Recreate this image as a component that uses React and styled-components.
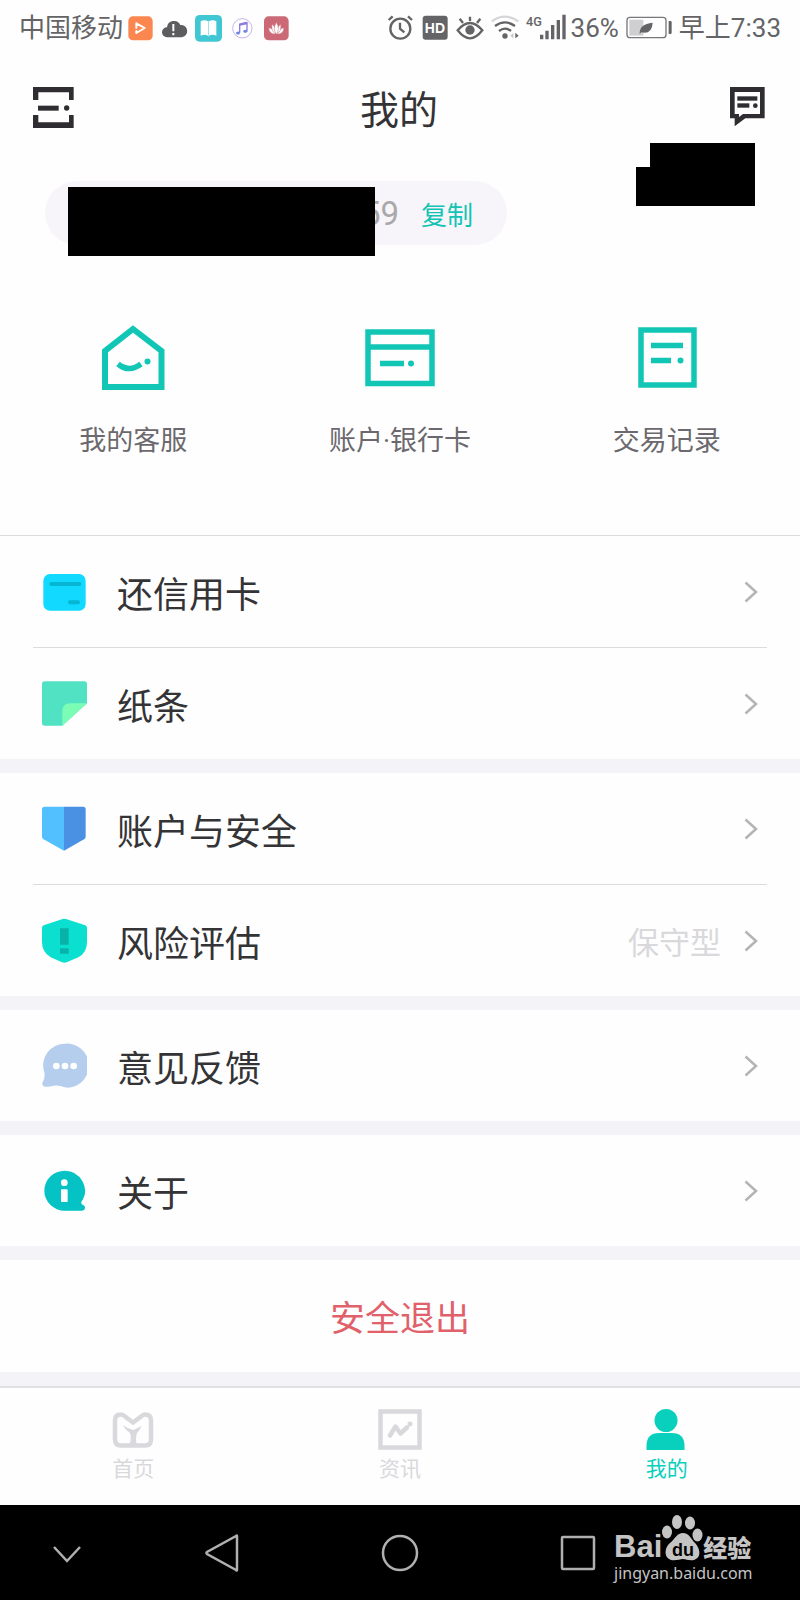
import styled, { createGlobalStyle } from "styled-components";

const cjkFont = `"Noto Sans CJK SC", sans-serif`;

const GlobalStyle = createGlobalStyle`
  * {
    box-sizing: border-box;
  }

  body {
    margin: 0;
    background: #fefefe;
    color: #343336;
    font-family: Roboto, "Noto Sans CJK SC", sans-serif;
  }

  a {
    color: inherit;
    text-decoration: none;
  }

  button {
    border: none;
    padding: 0;
    background: none;
    font: inherit;
    cursor: pointer;
  }

  svg {
    display: block;
    flex: none;
  }
`;

const Page = styled.div`
  display: flex;
  flex-direction: column;
  min-height: 100vh;
`;

const StatusBar = styled.div`
  display: flex;
  justify-content: space-between;
  align-items: center;
  height: 56px;
  padding: 0 19px;
  color: #646466;
  font-size: 26px;
  line-height: 36px;
  white-space: nowrap;
`;

const StatusGroup = styled.div`
  display: flex;
  align-items: center;
  gap: ${({ $gap }) => $gap}px;
`;

const Header = styled.header`
  display: grid;
  grid-template-columns: 1fr auto 1fr;
  align-items: center;
  height: 102px;
  padding: 0 35px 0 33px;
`;

const Title = styled.h1`
  margin: 0;
  font-family: ${cjkFont};
  font-size: 39px;
  font-weight: 400;
  line-height: 52px;
`;

const IconButton = styled.button`
  justify-self: ${({ $side }) => $side};
`;

const Profile = styled.section`
  position: relative;
  padding: 23px 45px 0;
`;

const AccountPill = styled.div`
  position: relative;
  display: flex;
  justify-content: flex-end;
  align-items: center;
  gap: 22px;
  width: 462px;
  height: 64px;
  padding-right: 34px;
  border-radius: 32px;
  background: #f7f5f9;
`;

const AccountNumber = styled.span`
  color: #a9a8ab;
  font-size: 33px;
`;

const CopyButton = styled.button`
  && {
    color: #13c4b4;
    font-size: 26px;
  }
`;

const NumberMask = styled.div`
  position: absolute;
  left: 23px;
  top: 6px;
  width: 307px;
  height: 69px;
  background: #000;
`;

const NameMask = styled.div`
  position: absolute;
  right: 45px;
  top: -15px;
  width: 119px;
  height: 63px;
  background: #000;
  clip-path: polygon(14px 0, 100% 0, 100% 100%, 0 100%, 0 24px, 14px 24px);
`;

const Shortcuts = styled.nav`
  display: grid;
  grid-template-columns: repeat(3, 1fr);
  padding: 80px 0 76px;
  border-bottom: 1px solid #dcdbdf;
`;

const Shortcut = styled.a`
  display: flex;
  flex-direction: column;
  align-items: center;
  gap: 32px;
  color: #6b696d;
  font-size: 27px;
  line-height: 36px;
`;

const Menu = styled.main`
  display: flex;
  flex-direction: column;
  gap: 14px;
  padding-bottom: 14px;
  background: #f4f3f8;
`;

const MenuGroup = styled.div`
  background: #fefefe;
`;

const Divider = styled.hr`
  height: 1px;
  margin: 0 33px;
  border: none;
  background: #dcdbdf;
`;

const MenuRow = styled.a`
  display: flex;
  align-items: center;
  height: 111px;
  padding: 0 42px 0 41px;
  font-family: ${cjkFont};
`;

const RowLabel = styled.span`
  flex: 1;
  padding-left: 30px;
  font-size: 36px;
  line-height: 52px;
`;

const RowValue = styled.span`
  margin-right: 23px;
  color: #d9d8dc;
  font-size: 31px;
  line-height: 52px;
`;

const LogoutButton = styled.button`
  && {
    height: 112px;
    background: #fefefe;
    color: #e0616a;
    font-family: ${cjkFont};
    font-size: 35px;
    line-height: 52px;
  }
`;

const TabBar = styled.nav`
  display: grid;
  grid-template-columns: repeat(3, 1fr);
  padding: 20px 0 24px;
  border-top: 2px solid #e0dfe3;
`;

const Tab = styled.a`
  display: flex;
  flex-direction: column;
  align-items: center;
  gap: 5px;
  color: ${({ $active }) => ($active ? "#09cfbd" : "#d9d8dc")};
  font-size: 21px;
  line-height: 24px;
`;

const SystemNav = styled.footer`
  position: relative;
  display: grid;
  grid-template-columns: 3fr 4fr 4fr 4fr 3fr;
  flex: 1;
  min-height: 95px;
  background: #000;
`;

const SystemButton = styled.button`
  display: flex;
  align-items: center;
  justify-content: center;
`;

const Watermark = styled.div`
  position: absolute;
  right: 44px;
  top: 10px;
  width: 142px;
  color: #c4c4c4;
`;

const Brand = styled.div`
  display: flex;
  align-items: flex-end;
  height: 46px;
  font: 700 31px/28px "Liberation Sans", sans-serif;
`;

const BrandName = styled.span`
  font: 900 24px/28px "Noto Sans CJK SC", sans-serif;
`;

const BrandUrl = styled.div`
  font: 400 16px/24px "Noto Sans", sans-serif;
`;

const ScanIcon = () => (
  <svg width="41" height="41" viewBox="99 258 123 123" fill="#2f2d31">
    <path d="M99 258h122v39h-14v-23h-92v23H99zM99 381h122v-39h-14v22h-92v-22H99z" />
    <rect x="114" y="314" width="62" height="15" />
    <circle cx="200" cy="321" r="8" />
  </svg>
);

const MessageIcon = () => (
  <svg width="35" height="40" viewBox="1078 260 105 120" fill="#2f2d31">
    <path
      fillRule="evenodd"
      d="M1078 260h104v94h-58l-32 24v-24h-14zM1092 275v66h13v9l12-9h51v-66z"
    />
    <rect x="1100" y="288" width="60" height="13" />
    <rect x="1100" y="309" width="36" height="13" />
    <circle cx="1154" cy="316" r="7" />
  </svg>
);

const VideoAppIcon = () => (
  <svg width="27" height="27" viewBox="383 41 81 81">
    <rect x="387" y="45" width="73" height="72" rx="14" fill="#fb8650" />
    <path
      d="M411 66v13M411 66l25 14-25 15v-6"
      fill="none"
      stroke="#fff"
      strokeWidth="6"
      strokeLinejoin="round"
      strokeLinecap="round"
    />
  </svg>
);

const CloudIcon = () => (
  <svg width="27" height="27" viewBox="483 41 81 81">
    <path
      d="M501 108a15 15 0 0 1 0-30 21 21 0 0 1 40-7 18 18 0 0 1 4 37z"
      fill="#5d5c5f"
    />
    <path d="M520 68v22M520 95v7" stroke="#fff" strokeWidth="6" />
  </svg>
);

const BookIcon = () => (
  <svg width="27" height="27" viewBox="582 40 81 81">
    <rect x="582" y="40" width="81" height="80" rx="14" fill="#41c7d3" />
    <path d="M599 59q12-6 22 0v43q-10-6-22 0zM624 59q11-6 22 0v43q-12-6-22 0z" fill="#fff" />
    <path d="M622.500 57v48" stroke="#9ee3e9" strokeWidth="3" />
  </svg>
);

const MusicIcon = () => (
  <svg width="27" height="27" viewBox="682 41 81 81">
    <circle cx="722" cy="81" r="29" fill="#fff" stroke="#c9b4ea" strokeWidth="3" />
    <path d="M714 94V69l22-5v25" fill="none" stroke="#8c7be0" strokeWidth="4" />
    <path d="M714 70l22-5" stroke="#8c7be0" strokeWidth="7" />
    <ellipse cx="709" cy="95" rx="6" ry="4.500" fill="#6f86e4" />
    <ellipse cx="731" cy="90" rx="6" ry="4.500" fill="#6f86e4" />
  </svg>
);

const LotusIcon = () => (
  <svg width="27" height="27" viewBox="783 41 81 81">
    <rect x="786" y="45" width="74" height="72" rx="14" fill="#cb6a76" />
    <g fill="#fff" stroke="#cb6a76" strokeWidth="1.500">
      <path d="M822 98q-20 2-22-19 16 2 22 19zM824 98q20 2 22-19-16 2-22 19z" />
      <path d="M822 98q-16-8-12-29 13 9 12 29zM824 98q16-8 12-29-13 9-12 29z" />
      <path d="M823 99q-12-16 0-36 12 20 0 36z" />
    </g>
  </svg>
);

const AlarmIcon = () => (
  <svg width="28" height="28" viewBox="48 40 84 84" fill="none" stroke="#646466" strokeWidth="7">
    <circle cx="91" cy="84" r="30" />
    <path d="M90 66v18l13 11M56 58l12-11M126 58l-12-11" />
  </svg>
);

const HdIcon = () => (
  <svg width="28" height="28" viewBox="148 40 84 84">
    <rect x="153" y="45" width="75" height="72" rx="9" fill="#646466" />
    <text
      x="190"
      y="96"
      textAnchor="middle"
      fill="#fff"
      fontFamily="Liberation Sans, sans-serif"
      fontSize="42"
      fontWeight="700"
    >
      HD
    </text>
  </svg>
);

const EyeIcon = () => (
  <svg width="28" height="28" viewBox="252 40 84 84" fill="none" stroke="#646466" strokeWidth="7">
    <path d="M257 89q37-44 74 0-37 48-74 0zM294 61V48M273 67l-10-13M315 67l10-13" />
    <circle cx="294" cy="88" r="14" fill="#646466" stroke="none" />
  </svg>
);

const WifiIcon = () => (
  <svg width="28" height="28" viewBox="358 40 84 84" fill="none" strokeWidth="7">
    <path d="M360 62q40-28 80 0" stroke="#d6d6d8" />
    <path d="M370 76q30-22 60 0M382 91q18-14 36 0" stroke="#646466" />
    <circle cx="400" cy="106" r="8" fill="#646466" />
    <path d="M425 97v16l-9-8z" fill="#c4c4c6" />
    <path d="M431 96v17l10-8z" fill="#646466" />
  </svg>
);

const SignalIcon = () => (
  <svg width="41" height="28" viewBox="464 40 123 84" fill="#646466">
    <text
      x="464"
      y="75"
      fontFamily="Roboto, sans-serif"
      fontSize="38"
      fontWeight="500"
    >
      4G
    </text>
    <path d="M506 102h10v14h-10zM522 90h10v26h-10zM539 73h10v43h-10zM556 58h10v58h-10zM573 42h10v74h-10z" />
  </svg>
);

const BatteryIcon = () => (
  <svg width="46" height="28" viewBox="764 40 138 84">
    <rect x="774" y="57" width="42" height="48" fill="#cfcfd1" />
    <rect
      x="767"
      y="50"
      width="117"
      height="61"
      rx="9"
      fill="none"
      stroke="#77767a"
      strokeWidth="4"
    />
    <path d="M892 61h5q4 0 4 4v31q0 4-4 4h-5z" fill="#646466" />
    <path d="M805 100q-2-30 39-34-2 36-34 29l17-18-22 23z" fill="#646466" />
  </svg>
);

const ServiceIcon = () => (
  <svg width="70" height="66" viewBox="98 325 70 66" fill="none" stroke="#12c6b6">
    <path d="M133 329l28.500 22v36h-56.500V351z" strokeWidth="6" />
    <path d="M118 364q11 9 23 0" strokeWidth="5.500" />
    <circle cx="147.500" cy="361.500" r="3" fill="#12c6b6" stroke="none" />
  </svg>
);

const BankCardIcon = () => (
  <svg width="70" height="66" viewBox="365 325 70 66">
    <path
      d="M368 332h64v51.500h-64zM368 347h64M380 363.500h24"
      fill="none"
      stroke="#12c6b6"
      strokeWidth="5.500"
    />
    <circle cx="411" cy="363.500" r="3" fill="#12c6b6" />
  </svg>
);

const RecordsIcon = () => (
  <svg width="70" height="66" viewBox="632 325 70 66">
    <path
      d="M641 330h53v55h-53zM651 345.500h32M651 360.500h20"
      fill="none"
      stroke="#12c6b6"
      strokeWidth="5.500"
    />
    <circle cx="680.500" cy="360.500" r="3" fill="#12c6b6" />
  </svg>
);

const CreditIcon = () => (
  <svg width="46" height="46" viewBox="123 145 138 138">
    <rect x="130" y="160" width="127" height="110" rx="20" fill="#11d9ff" />
    <path
      d="M154 190h84M210 245h24"
      stroke="#06b5d2"
      strokeWidth="12"
      strokeLinecap="round"
    />
  </svg>
);

const NoteIcon = () => (
  <svg width="46" height="46" viewBox="123 481 138 138">
    <path
      d="M134 482h119q8 0 8 8v58l-74 67h-53q-8 0-8-8V490q0-8 8-8z"
      fill="#50e2c2"
    />
    <path d="M187 615v-43q0-24 24-24h50z" fill="#7bfdb6" />
  </svg>
);

const SecurityIcon = () => (
  <svg width="46" height="46" viewBox="123 76 138 138">
    <path d="M192 78h-58q-8 0-8 8v82q0 5 5 8l61 34z" fill="#52bfff" />
    <path d="M192 78h57q8 0 8 8v82q0 5-5 8l-60 34z" fill="#4a91e3" />
  </svg>
);

const RiskIcon = () => (
  <svg width="46" height="46" viewBox="123 412 138 138">
    <path
      d="M188 415q5-2 10 0l58 19q5 2 5 7v43q0 32-26 46l-35 15q-7 2-14 0l-34-15q-26-16-26-46v-43q0-5 5-7z"
      fill="#0be0d0"
    />
    <path d="M180 443h26v49h-26zM180 503h26v16h-26z" fill="#08b2a8" />
  </svg>
);

const FeedbackIcon = () => (
  <svg width="46" height="46" viewBox="123 67 138 138">
    <path
      d="M196 69a64 64 0 0 1 9 132q-10 0-24-5-14-3-28 1-14 3-22 0-6-4-3-12 8-13 5-30a65 65 0 0 1 63-86z"
      fill="#b6ceed"
    />
    <g fill="#fff">
      <circle cx="169" cy="136" r="10" />
      <circle cx="195" cy="136" r="10" />
      <circle cx="221" cy="136" r="10" />
    </g>
  </svg>
);

const AboutIcon = () => (
  <svg width="46" height="46" viewBox="123 442 138 138">
    <path
      d="M194 450a61 60 0 0 1 50 94q-2 6 7 10 5 3 4 9-1 7-9 7h-52a61 60 0 0 1 0-120z"
      fill="#05c2c4"
    />
    <circle cx="193" cy="486" r="10" fill="#fff" />
    <rect x="183" y="506" width="20" height="38" rx="2" fill="#fff" />
  </svg>
);

const Chevron = () => (
  <svg width="14" height="22" viewBox="0 0 14 22" fill="none">
    <path d="M1.500 1.500L12 11L1.500 20.500" stroke="#b4b3b6" strokeWidth="2.500" />
  </svg>
);

const HomeTabIcon = () => (
  <svg width="44" height="44" viewBox="111 1408 44 44">
    <path
      d="M121 1414.500q-6 0-6 6v19q0 6 6 6h24q6 0 6-6v-19q0-6-6-6-2 0-4 2l-8 6-8-6q-2-2-4-2z"
      fill="none"
      stroke="#d9d8dc"
      strokeWidth="4.500"
    />
    <path
      d="M122.500 1425q3 5 7.500 8 2 6-1 12h8q-2-6 0-12 3-3 4.500-7l-8 4q-5-1-11-5z"
      fill="#d9d8dc"
    />
  </svg>
);

const NewsTabIcon = () => (
  <svg width="44" height="44" viewBox="378 1408 44 44">
    <rect
      x="380.500"
      y="1411.500"
      width="39"
      height="36"
      fill="none"
      stroke="#d9d8dc"
      strokeWidth="4.500"
    />
    <path
      d="M390 1435.500l5.500-9 5 7 6.500-6"
      fill="none"
      stroke="#d9d8dc"
      strokeWidth="4.500"
      strokeLinecap="round"
      strokeLinejoin="round"
    />
    <circle cx="410" cy="1424" r="2.500" fill="#d9d8dc" />
  </svg>
);

const MineTabIcon = () => (
  <svg width="44" height="44" viewBox="645 1408 44 44" fill="#09cfbd">
    <circle cx="666" cy="1420.500" r="11.500" />
    <path d="M646.500 1450v-4q0-13 13-13h12q13 0 13 13v4z" />
  </svg>
);

const PawIcon = () => (
  <svg width="41" height="46" viewBox="663 1515 41 46" fill="#c4c4c4">
    <ellipse cx="668" cy="1532" rx="5" ry="6.500" />
    <ellipse cx="678" cy="1522" rx="5" ry="7" />
    <ellipse cx="691" cy="1523" rx="5" ry="6.500" />
    <ellipse cx="698.500" cy="1535" rx="5" ry="6.500" />
    <path d="M684 1533c6 0 8 6 12 10s8 14-1 17c-5 1-8-1-11-1s-7 2-12 1c-8-3-6-13-1-17s7-10 13-10z" />
    <text
      x="684"
      y="1556"
      textAnchor="middle"
      fill="#000"
      fontFamily="Liberation Sans, sans-serif"
      fontSize="18"
      fontWeight="700"
    >
      du
    </text>
  </svg>
);

const shortcuts = [
  { label: "我的客服", Icon: ServiceIcon },
  { label: "账户·银行卡", Icon: BankCardIcon },
  { label: "交易记录", Icon: RecordsIcon },
];

const menuGroups = [
  [
    { label: "还信用卡", Icon: CreditIcon },
    { label: "纸条", Icon: NoteIcon },
  ],
  [
    { label: "账户与安全", Icon: SecurityIcon },
    { label: "风险评估", Icon: RiskIcon, value: "保守型" },
  ],
  [{ label: "意见反馈", Icon: FeedbackIcon }],
  [{ label: "关于", Icon: AboutIcon }],
];

const tabs = [
  { label: "首页", Icon: HomeTabIcon },
  { label: "资讯", Icon: NewsTabIcon },
  { label: "我的", Icon: MineTabIcon, active: true },
];

const systemButtons = [
  { label: "收起", path: "M6 13l13 14 13-14" },
  { label: "返回", path: "M34 2v34q0 1-1 0L4 20q-1-1 0-2L33 2q1-1 1 0z" },
  { label: "主屏幕", path: "M19 2a17 17 0 0 1 0 34a17 17 0 0 1 0-34z" },
  { label: "最近任务", path: "M4 3h30q1 0 1 1v30q0 1-1 1H4q-1 0-1-1V4q0-1 1-1z" },
];

const MenuItem = ({ label, Icon, value }) => (
  <MenuRow href="#">
    <Icon />
    <RowLabel>{label}</RowLabel>
    {value ? <RowValue>{value}</RowValue> : null}
    <Chevron />
  </MenuRow>
);

export default function App() {
  return (
    <Page>
      <GlobalStyle />
      <StatusBar>
        <StatusGroup $gap={4}>
          <span>中国移动</span>
          <StatusGroup $gap={7}>
            <VideoAppIcon />
            <CloudIcon />
            <BookIcon />
            <MusicIcon />
            <LotusIcon />
          </StatusGroup>
        </StatusGroup>
        <StatusGroup $gap={7}>
          <AlarmIcon />
          <HdIcon />
          <EyeIcon />
          <WifiIcon />
          <StatusGroup $gap={4}>
            <SignalIcon />
            <span>36%</span>
          </StatusGroup>
          <BatteryIcon />
          <span>早上7:33</span>
        </StatusGroup>
      </StatusBar>

      <Header>
        <IconButton $side="start" aria-label="扫一扫">
          <ScanIcon />
        </IconButton>
        <Title>我的</Title>
        <IconButton $side="end" aria-label="消息">
          <MessageIcon />
        </IconButton>
      </Header>

      <Profile>
        <AccountPill>
          <AccountNumber>59</AccountNumber>
          <CopyButton>复制</CopyButton>
          <NumberMask />
        </AccountPill>
        <NameMask />
      </Profile>

      <Shortcuts>
        {shortcuts.map(({ label, Icon }) => (
          <Shortcut href="#" key={label}>
            <Icon />
            {label}
          </Shortcut>
        ))}
      </Shortcuts>

      <Menu>
        {menuGroups.map((group, i) => (
          <MenuGroup key={i}>
            {group.map((item, j) => (
              <div key={item.label}>
                {j > 0 ? <Divider /> : null}
                <MenuItem {...item} />
              </div>
            ))}
          </MenuGroup>
        ))}
        <LogoutButton>安全退出</LogoutButton>
      </Menu>

      <TabBar>
        {tabs.map(({ label, Icon, active }) => (
          <Tab href="#" key={label} $active={active}>
            <Icon />
            {label}
          </Tab>
        ))}
      </TabBar>

      <SystemNav>
        {systemButtons.map(({ label, path }) => (
          <SystemButton key={label} aria-label={label}>
            <svg width="38" height="38" viewBox="0 0 38 38" fill="none">
              <path d={path} stroke="#b0b0b0" strokeWidth="2.500" />
            </svg>
          </SystemButton>
        ))}
        <Watermark>
          <Brand>
            Bai
            <PawIcon />
            <BrandName>经验</BrandName>
          </Brand>
          <BrandUrl>jingyan.baidu.com</BrandUrl>
        </Watermark>
      </SystemNav>
    </Page>
  );
}
